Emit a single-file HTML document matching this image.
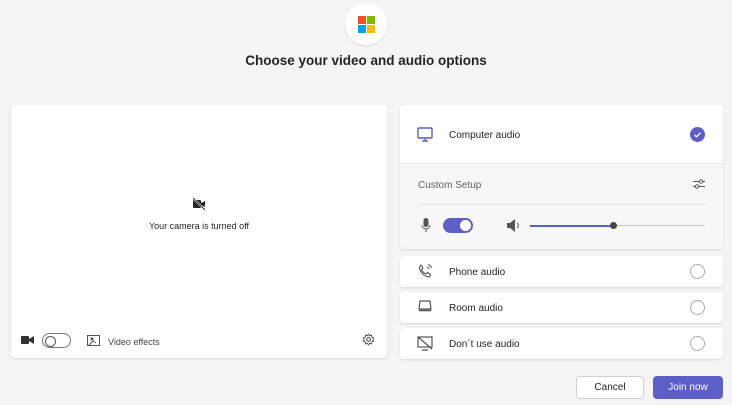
<!DOCTYPE html><html><head><style>
body{margin:0;width:732px;height:405px;background:#f4f4f4;font-family:"Liberation Sans",sans-serif;position:relative;overflow:hidden;color:#242424}
.a{position:absolute}
.card{position:absolute;background:#fff;border-radius:4px;box-shadow:0 1px 2px rgba(0,0,0,.12)}
.t{font-size:10px;position:absolute}
.radio{position:absolute;width:13px;height:13px;border:1px solid #aaa;border-radius:50%;left:290px}
</style></head><body>
<div class="a" style="left:345px;top:3px;width:42px;height:42px;border-radius:50%;background:#fff;box-shadow:0 1px 2px rgba(0,0,0,.1)"></div>
<div class="a" style="left:358px;top:16px;width:8px;height:8px;background:#f25022"></div>
<div class="a" style="left:367px;top:16px;width:8px;height:8px;background:#7fba00"></div>
<div class="a" style="left:358px;top:25px;width:8px;height:8px;background:#00a4ef"></div>
<div class="a" style="left:367px;top:25px;width:8px;height:8px;background:#ffb900"></div>
<div class="a" style="left:0;width:732px;top:53px;text-align:center;font-weight:bold;font-size:13.5px">Choose your video and audio options</div>

<div class="card" style="left:11px;top:105px;width:376px;height:253px">
 <svg class="a" style="left:181px;top:93px" width="14" height="12" viewBox="0 0 14 12"><rect x="1" y="2" width="8" height="8" rx="1" fill="#242424"/><path d="M9 5l4-2v6l-4-2z" fill="#242424"/><path d="M1 0l12 12" stroke="#fff" stroke-width="2"/><path d="M1 0l12 12" stroke="#242424" stroke-width="1"/></svg>
 <div class="t" style="left:0;width:376px;top:116px;text-align:center;font-size:9px">Your camera is turned off</div>
 <svg class="a" style="left:10px;top:230px" width="13" height="10"><rect x="0" y="1" width="8" height="8" rx="1" fill="#333"/><path d="M8 4l5-3v8l-5-3z" fill="#333"/></svg>
 <div class="a" style="left:31px;top:228px;width:27px;height:13px;border:1px solid #777;border-radius:8px"><div class="a" style="left:2px;top:2px;width:9px;height:9px;border:1px solid #555;border-radius:50%"></div></div>
 <svg class="a" style="left:76px;top:229px" width="13" height="12"><rect x="0.5" y="1.5" width="12" height="10" fill="none" stroke="#555"/><circle cx="5" cy="5" r="1.5" fill="#555"/><path d="M2 11l4-4 3 2" stroke="#555" fill="none"/></svg>
 <div class="t" style="left:97px;top:232px;font-size:9px;color:#444">Video effects</div>
 <svg class="a" style="left:351px;top:228px" width="13" height="13" viewBox="0 0 24 24"><circle cx="12" cy="12" r="3.5" fill="none" stroke="#555" stroke-width="2"/><path d="M12 2l2 3 3.5-1 .5 3.5 3.5 1.5-1.5 3 1.5 3-3.5 1.5-.5 3.5-3.5-1-2 3-2-3-3.5 1-.5-3.5L2.5 15 4 12 2.5 9 6 7.5 6.5 4 10 5z" fill="none" stroke="#555" stroke-width="1.8"/></svg>
</div>

<div class="card" style="left:400px;top:105px;width:323px;height:144px;overflow:hidden">
 <div class="a" style="left:0;top:58px;width:323px;height:86px;background:#f7f7f7;border-top:1px solid #e6e6e6"></div>
 <svg class="a" style="left:17px;top:22px" width="17" height="15"><rect x="1" y="1" width="14" height="10" rx="1" fill="none" stroke="#5b5fc7" stroke-width="1.4"/><path d="M5 14h6M8 11v3" stroke="#5b5fc7" stroke-width="1.4"/></svg>
 <div class="t" style="left:49px;top:25px;font-size:10px">Computer audio</div>
 <div class="a" style="left:290px;top:22px;width:15px;height:15px;border-radius:50%;background:#5b5fc7"><svg width="15" height="15"><path d="M4.5 7.8l2 2 4-4" stroke="#fff" stroke-width="1.3" fill="none"/></svg></div>
 <div class="t" style="left:18px;top:75px;color:#616161;font-size:10px">Custom Setup</div>
 <svg class="a" style="left:292px;top:73px" width="14" height="12"><path d="M1 3.5h12M1 8.5h12" stroke="#555"/><circle cx="9" cy="3.5" r="1.7" fill="#f7f7f7" stroke="#555"/><circle cx="5" cy="8.5" r="1.7" fill="#f7f7f7" stroke="#555"/></svg>
 <div class="a" style="left:18px;top:99px;width:288px;height:1px;background:#e4e4e4"></div>
 <svg class="a" style="left:21px;top:113px" width="10" height="15"><rect x="2.5" y="0" width="5" height="9" rx="2.5" fill="#555"/><path d="M1 7a4 4 0 008 0M5 11v3" stroke="#555" fill="none"/></svg>
 <div class="a" style="left:43px;top:113px;width:30px;height:15px;border-radius:8px;background:#5b5fc7"><div class="a" style="left:17px;top:2px;width:11px;height:11px;border-radius:50%;background:#fff"></div></div>
 <svg class="a" style="left:106px;top:114px" width="16" height="13"><path d="M1 4h3l5-4v13l-5-4H1z" fill="#555"/><path d="M11 4a3 3 0 010 5" stroke="#555" fill="none"/></svg>
 <div class="a" style="left:130px;top:120px;width:84px;height:1.5px;background:#5b5fc7"></div>
 <div class="a" style="left:214px;top:120px;width:91px;height:1px;background:#c8c8c8"></div>
 <div class="a" style="left:210px;top:117px;width:7px;height:7px;border-radius:50%;background:#444"></div>
</div>

<div class="card" style="left:400px;top:256px;width:323px;height:31px">
 <svg class="a" style="left:17px;top:7px" width="16" height="16" viewBox="0 0 16 16"><path d="M4 2l2 3-1.5 1.5c.8 2 2.5 3.7 4.5 4.5L10.5 9.5l3 2-1 2.5c-5 0-10-5-10-10z" fill="none" stroke="#555" stroke-width="1.1"/><path d="M10 4a3 3 0 012 2M11 1.5a5.5 5.5 0 013.5 3.5" stroke="#555" fill="none"/></svg>
 <div class="t" style="left:49px;top:11px">Phone audio</div><div class="radio" style="top:8px"></div>
</div>
<div class="card" style="left:400px;top:292px;width:323px;height:31px">
 <svg class="a" style="left:17px;top:8px" width="16" height="14"><path d="M3 1h10l1 8H2z" fill="none" stroke="#555" stroke-width="1.2"/><path d="M2 10.5h12" stroke="#555" stroke-width="1.5"/></svg>
 <div class="t" style="left:49px;top:11px">Room audio</div><div class="radio" style="top:8px"></div>
</div>
<div class="card" style="left:400px;top:328px;width:323px;height:31px">
 <svg class="a" style="left:17px;top:8px" width="17" height="15"><rect x="1" y="1" width="14" height="10" fill="none" stroke="#555" stroke-width="1.2"/><path d="M5 14h6M1 1l14 12" stroke="#555" stroke-width="1.2"/></svg>
 <div class="t" style="left:49px;top:11px">Don´t use audio</div><div class="radio" style="top:8px"></div>
</div>

<div class="a" style="left:576px;top:376px;width:68px;height:23px;background:#fff;border:1px solid #d1d1d1;border-radius:4px;box-sizing:border-box;font-size:10px;text-align:center;line-height:21px">Cancel</div>
<div class="a" style="left:653px;top:376px;width:70px;height:23px;background:#5b5fc7;border-radius:4px;font-size:10px;color:#fff;text-align:center;line-height:23px">Join now</div>
</body></html>
